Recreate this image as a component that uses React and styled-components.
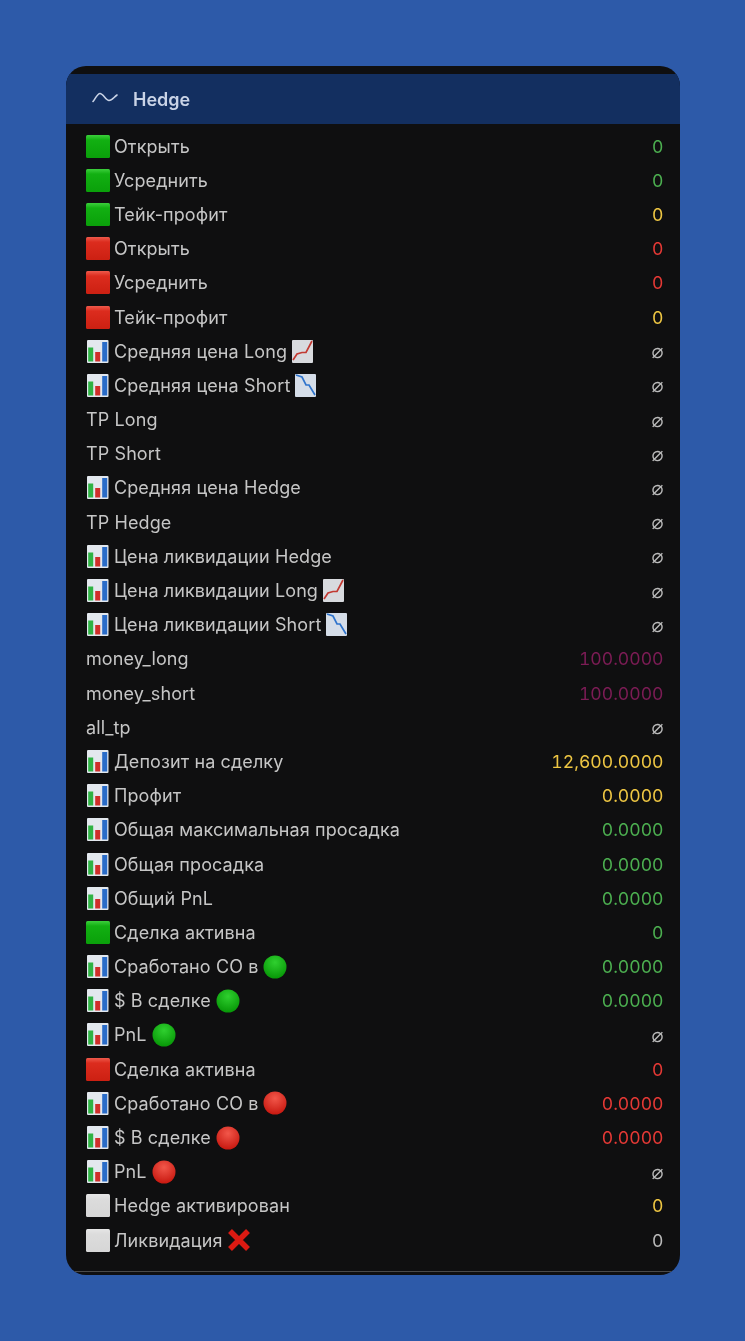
import React from "react"
import styled, { createGlobalStyle } from "styled-components"

const GlobalStyle = createGlobalStyle`
	html, body {
		margin: 0;
		padding: 0;
		background: #2d5aa9;
	}
`

const Page = styled.div`
	width: 745px;
	height: 1341px;
	padding: 66px 65px 66px 66px;
	box-sizing: border-box;
	overflow: hidden;
	font-family: Inter, "Liberation Sans", sans-serif;
	filter: blur(0.35px);
`

const Card = styled.div`
	height: 1209px;
	padding-top: 8px;
	box-sizing: border-box;
	display: flex;
	flex-direction: column;
	background: #0f0f10;
	border-radius: 20px;
	overflow: hidden;
`

const Header = styled.div`
	height: 50px;
	flex: none;
	display: flex;
	align-items: center;
	gap: 15px;
	padding-left: 26px;
	background: #132f60;
	color: #c9d3e6;
	font-size: 18px;
	font-weight: 600;
`

const List = styled.div`
	flex: 1;
	padding-top: 5px;
`

const Row = styled.div`
	height: 34.19px;
	display: flex;
	align-items: center;
	justify-content: space-between;
	padding: 0 16.5px 0 20px;
`

const Label = styled.div`
	display: flex;
	align-items: center;
	gap: 4px;
	color: #c6c6c6;
	font-size: 18px;
	letter-spacing: 0.1px;
	white-space: nowrap;
`

const Tail = styled.span`
	display: flex;
	margin-left: 1px;
`

const Value = styled.div`
	color: ${(p) => p.$color};
	font-size: 17.6px;
	font-feature-settings: "tnum";
	white-space: nowrap;
`

const Empty = styled.div`
	color: #b9b9b9;
	font-family: "DejaVu Sans", sans-serif;
	font-size: 20px;
	line-height: 20px;
`

const BottomLine = styled.div`
	height: 1px;
	flex: none;
	margin-bottom: 3px;
	background: #4a4a4a;
`

const Trend = () => (
	<svg width="26" height="16" viewBox="0 0 26 16" fill="none" stroke="#c9d3e6" strokeWidth="1.6" strokeLinecap="round" strokeLinejoin="round">
		<path d="M1 10.5C3 8 5.5 2.5 8 2.5C11 2.5 14 9.5 17 9.5C20 9.5 22 6 25 4" />
	</svg>
)

const Square = ({ kind }) => {
	const colors = {
		green: ["#3ccf3c", "#12b012", "#0aa00a"],
		red: ["#ee5a4c", "#dc2c1e", "#cc2012"],
		white: ["#e6e6e6", "#dcdcdc", "#d6d6d6"]
	}[kind]
	return (
		<svg width="24" height="23" viewBox="0 0 24 23">
			<defs>
				<linearGradient id={`sq-${kind}`} x1="0" y1="0" x2="0" y2="1">
					<stop offset="0" stopColor={colors[0]} />
					<stop offset="0.22" stopColor={colors[1]} />
					<stop offset="1" stopColor={colors[2]} />
				</linearGradient>
			</defs>
			<rect width="24" height="23" rx="1.5" fill={`url(#sq-${kind})`} />
		</svg>
	)
}

const Bars = () => (
	<svg width="24" height="23" viewBox="0 0 24 23">
		<rect x="1" width="21.5" height="23" rx="1" fill="#e3e8ee" />
		<rect x="2.2" y="7.5" width="5" height="14" fill="#2fb344" />
		<rect x="9.2" y="12" width="5" height="9.5" fill="#cf2f2a" />
		<rect x="16.2" y="2" width="5" height="19.5" fill="#2a6cc8" />
	</svg>
)

const ChartUp = () => (
	<svg width="21" height="23" viewBox="0 0 21 23">
		<rect width="21" height="23" rx="1" fill="#d8dade" />
		<path d="M1 20L5 14L10 12.5L14 12.5L20 1" fill="none" stroke="#c23a32" strokeWidth="1.7" />
	</svg>
)

const ChartDown = () => (
	<svg width="21" height="23" viewBox="0 0 21 23">
		<rect width="21" height="23" rx="1" fill="#d5dde8" />
		<path d="M1 1L7 3L11 11L14 11L20 21" fill="none" stroke="#2f74cc" strokeWidth="1.7" />
	</svg>
)

const Dot = ({ kind }) => {
	const colors = kind === "green" ? ["#2fd02f", "#049304"] : ["#f2574a", "#c5140c"]
	return (
		<svg width="24" height="24" viewBox="0 0 24 24">
			<defs>
				<radialGradient id={`dot-${kind}`} cx="0.5" cy="0.3" r="0.75">
					<stop offset="0" stopColor={colors[0]} />
					<stop offset="1" stopColor={colors[1]} />
				</radialGradient>
			</defs>
			<circle cx="12" cy="12" r="11.5" fill={`url(#dot-${kind})`} />
		</svg>
	)
}

const Cross = () => (
	<svg width="24" height="24" viewBox="0 0 24 24">
		<path d="M3 3L21 21M21 3L3 21" stroke="#dc1a12" strokeWidth="5.5" />
	</svg>
)

const GREEN = "#4caf50"
const RED = "#e53935"
const YELLOW = "#eec643"
const MAROON = "#7c1c55"
const GREY = "#b9b9b9"

const g = <Square kind="green" />
const r = <Square kind="red" />
const w = <Square kind="white" />
const b = <Bars />

const rows = [
	[g, "Открыть", null, "0", GREEN],
	[g, "Усреднить", null, "0", GREEN],
	[g, "Тейк-профит", null, "0", YELLOW],
	[r, "Открыть", null, "0", RED],
	[r, "Усреднить", null, "0", RED],
	[r, "Тейк-профит", null, "0", YELLOW],
	[b, "Средняя цена Long", <ChartUp />],
	[b, "Средняя цена Short", <ChartDown />],
	[null, "TP Long"],
	[null, "TP Short"],
	[b, "Средняя цена Hedge"],
	[null, "TP Hedge"],
	[b, "Цена ликвидации Hedge"],
	[b, "Цена ликвидации Long", <ChartUp />],
	[b, "Цена ликвидации Short", <ChartDown />],
	[null, "money_long", null, "100.0000", MAROON],
	[null, "money_short", null, "100.0000", MAROON],
	[null, "all_tp"],
	[b, "Депозит на сделку", null, "12,600.0000", YELLOW],
	[b, "Профит", null, "0.0000", YELLOW],
	[b, "Общая максимальная просадка", null, "0.0000", GREEN],
	[b, "Общая просадка", null, "0.0000", GREEN],
	[b, "Общий PnL", null, "0.0000", GREEN],
	[g, "Сделка активна", null, "0", GREEN],
	[b, "Сработано СО в", <Dot kind="green" />, "0.0000", GREEN],
	[b, "$ В сделке", <Dot kind="green" />, "0.0000", GREEN],
	[b, "PnL", <Dot kind="green" />],
	[r, "Сделка активна", null, "0", RED],
	[b, "Сработано СО в", <Dot kind="red" />, "0.0000", RED],
	[b, "$ В сделке", <Dot kind="red" />, "0.0000", RED],
	[b, "PnL", <Dot kind="red" />],
	[w, "Hedge активирован", null, "0", YELLOW],
	[w, "Ликвидация", <Cross />, "0", GREY]
]

const App = () => (
	<>
		<GlobalStyle />
		<Page>
			<Card>
				<Header>
					<Trend />
					Hedge
				</Header>
				<List>
					{rows.map(([icon, text, tail, value, color], i) => (
						<Row key={i}>
							<Label>
								{icon}
								<span>{text}</span>
								{tail && <Tail>{tail}</Tail>}
							</Label>
							{value ? <Value $color={color}>{value}</Value> : <Empty>⌀</Empty>}
						</Row>
					))}
				</List>
				<BottomLine />
			</Card>
		</Page>
	</>
)

export default App
